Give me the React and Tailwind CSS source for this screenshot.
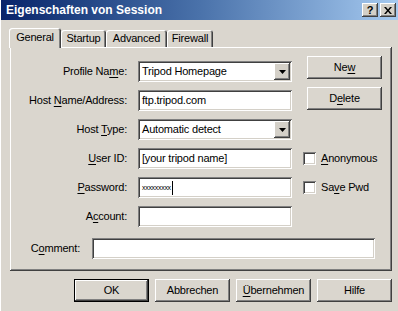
import React from 'react';

const raised = 'shadow-[inset_-1px_-1px_#404040,inset_1px_1px_#ffffff,inset_-2px_-2px_#808080]';
const sunken = 'shadow-[inset_1px_1px_#808080,inset_-1px_-1px_#ffffff,inset_2px_2px_#404040,inset_-2px_-2px_#d4d0c8]';

const U = ({ children }) => <span className="underline underline-offset-[2px]">{children}</span>;

const Label = ({ children, w = 'w-[118px]' }) => (
  <div className={`${w} shrink-0 text-right pr-[1px]`}>{children}</div>
);

const Field = ({ children, w = 'w-[154px]' }) => (
  <div className={`${w} h-[21px] shrink-0 bg-white ${sunken} flex items-center pl-[4px] overflow-hidden whitespace-nowrap`}>
    {children}
  </div>
);

const Select = ({ value }) => (
  <div className={`w-[154px] h-[21px] shrink-0 bg-white ${sunken} flex items-center pl-[4px] pr-[2px] py-[2px]`}>
    <span className="flex-1 whitespace-nowrap">{value}</span>
    <div className={`w-[16px] h-[17px] bg-[#d4d0c8] ${raised} flex items-center justify-center`}>
      <svg width="7" height="4" viewBox="0 0 7 4">
        <path d="M0 0h7L3.5 4z" fill="#000" />
      </svg>
    </div>
  </div>
);

const Button = ({ children, className = '' }) => (
  <div className={`w-[75px] h-[23px] shrink-0 bg-[#dad6ce] ${raised} flex items-center justify-center ${className}`}>
    {children}
  </div>
);

const Check = ({ children }) => (
  <div className="flex items-center gap-[5px] ml-[1px]">
    <div className={`w-[13px] h-[13px] bg-white ${sunken}`} />
    <span>{children}</span>
  </div>
);

const Tab = ({ children, active, w }) => (
  <div
    className={`${w} flex items-center justify-center rounded-t-[3px] bg-[#dad6ce] shadow-[inset_1px_1px_#ffffff,inset_-1px_0_#404040,inset_-2px_0_#808080] ${
      active ? 'h-[20px] relative z-10 pb-[2px]' : 'h-[17px] mb-[1px]'
    }`}
  >
    {children}
  </div>
);

export default function App() {
  return (
    <div className="w-[398px] h-[311px] overflow-hidden bg-[#dad6ce] shadow-[inset_1px_0_#ffffff] font-['Liberation_Sans',Arial,sans-serif] text-[11px] text-black tracking-[-0.2px]">
      {/* title bar */}
      <div className="h-[20px] ml-[1px] flex items-center bg-gradient-to-r from-[#0a246a] via-[#4a72aa] to-[#a6caf0] pl-[5px] pr-[2px]">
        <span className="flex-1 text-white font-bold text-[12px] tracking-normal">Eigenschaften von Session</span>
        <div className="flex gap-[2px]">
          <div className={`w-[16px] h-[14px] bg-[#d4d0c8] ${raised} flex items-center justify-center font-bold text-[11px] leading-none`}>?</div>
          <div className={`w-[16px] h-[14px] bg-[#d4d0c8] ${raised} flex items-center justify-center`}>
            <svg width="8" height="7" viewBox="0 0 8 7">
              <path d="M0 0h2l2 2.5L6 0h2L5 3.5 8 7H6L4 4.5 2 7H0l3-3.5z" fill="#000" />
            </svg>
          </div>
        </div>
      </div>

      {/* tabs */}
      <div className="flex items-end h-[20px] ml-[9px] mt-[8px]">
        <Tab active w="w-[52px]">General</Tab>
        <Tab w="w-[45px]">Startup</Tab>
        <Tab w="w-[61px]">Advanced</Tab>
        <Tab w="w-[46px]">Firewall</Tab>
      </div>

      {/* panel */}
      <div className={`-mt-[1px] ml-[10px] w-[382px] h-[224px] ${raised} pt-[14px] flex flex-col gap-[8px]`}>
        <div className="flex items-center h-[21px] gap-[10px]">
          <Label>Profile Na<U>m</U>e:</Label>
          <Select value="Tripod Homepage" />
          <Button className="ml-[5px] self-start -mt-[5px]">Ne<U>w</U></Button>
        </div>
        <div className="flex items-center h-[21px] gap-[10px]">
          <Label>Host <U>N</U>ame/Address:</Label>
          <Field>ftp.tripod.com</Field>
          <Button className="ml-[5px] self-start -mt-[3px]">D<U>e</U>lete</Button>
        </div>
        <div className="flex items-center h-[21px] gap-[10px]">
          <Label>Host <U>T</U>ype:</Label>
          <Select value="Automatic detect" />
        </div>
        <div className="flex items-center h-[21px] gap-[10px]">
          <Label><U>U</U>ser ID:</Label>
          <Field>[your tripod name]</Field>
          <Check><U>A</U>nonymous</Check>
        </div>
        <div className="flex items-center h-[21px] gap-[10px]">
          <Label><U>P</U>assword:</Label>
          <Field>
            <span className="text-[7px] tracking-[-0.3px] leading-none">xxxxxxxxx</span>
            <span className="w-[1px] h-[14px] bg-black ml-[1px]" />
          </Field>
          <Check>Sa<U>v</U>e Pwd</Check>
        </div>
        <div className="flex items-center h-[21px] gap-[10px]">
          <Label>A<U>c</U>count:</Label>
          <Field />
        </div>
        <div className="flex items-center h-[21px] gap-[11px] mt-[3px]">
          <Label w="w-[71px]">C<U>o</U>mment:</Label>
          <Field w="w-[283px]" />
        </div>
      </div>

      {/* bottom buttons */}
      <div className="flex gap-[6px] ml-[74px] mt-[8px]">
        <div className="w-[75px] h-[23px] border border-black">
          <div className={`w-full h-full bg-[#dad6ce] ${raised} flex items-center justify-center`}>OK</div>
        </div>
        <Button>Abbrechen</Button>
        <Button><U>Ü</U>bernehmen</Button>
        <Button>Hilfe</Button>
      </div>
    </div>
  );
}
